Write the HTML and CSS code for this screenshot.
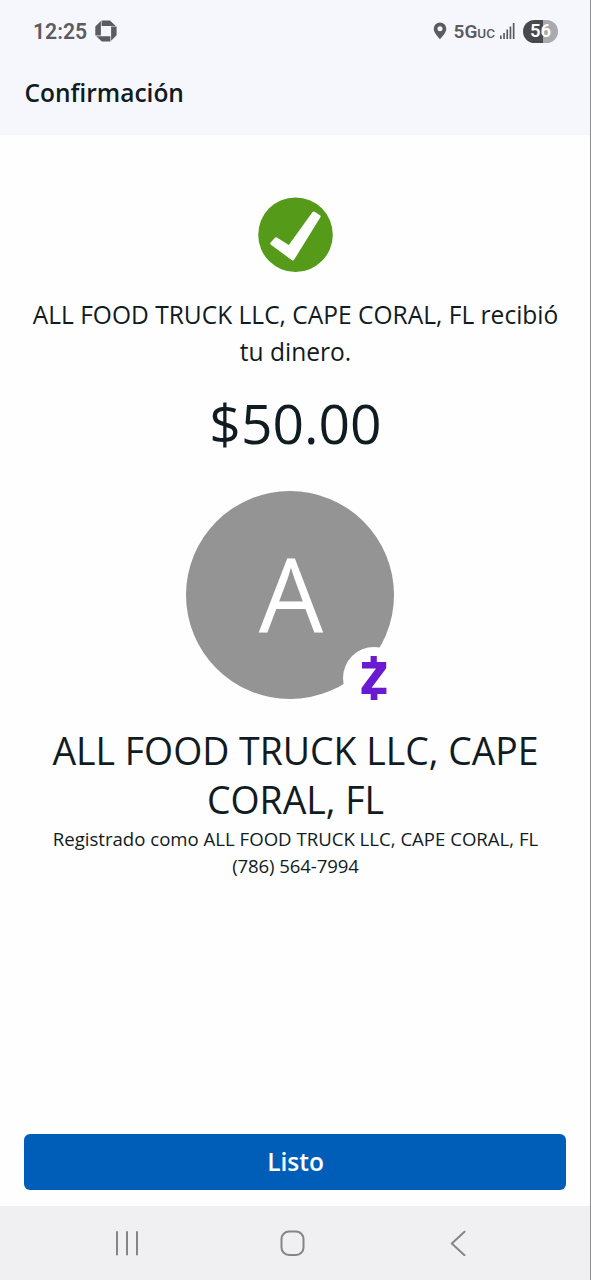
FILE: index.html
```html
<!DOCTYPE html>
<html lang="es">
<head>
<meta charset="utf-8">
<title>Confirmación</title>
<link rel="stylesheet" href="styles.css">
</head>
<body>
<div class="screen">
  <header class="header">
    <div class="status">
      <div class="status-left">
        <span class="clock">12:25</span>
        <svg class="bank" width="22" height="22" viewBox="0 0 22 22">
          <path d="M6.600.4H15l5.700 5.500H6.600zM21.600 6.500v8.700l-5.500 5.500V6.500zM15.400 21.600H6.800L1.200 16.200h14.200zM.3 15.500V6.600L5.900 1v14.500z"/>
        </svg>
      </div>
      <div class="status-right">
        <svg class="pin" width="14" height="18" viewBox="0 0 14 18">
          <path fill-rule="evenodd" d="M7 .5a6.3 6.3 0 0 0-6.3 6.3C.7 11 7 17.2 7 17.2s6.300-6.200 6.300-10.400A6.300 6.300 0 0 0 7 .5zm0 3.700a2.500 2.500 0 1 1 0 5 2.500 2.500 0 0 1 0-5z"/>
        </svg>
        <span class="network">5G<small>UC</small></span>
        <svg class="signal" width="15" height="16" viewBox="0 0 15 16">
          <path d="M0 12.500h1.700V16H0zM3.200 10h1.700v6H3.200zM6.400 6.500h1.700V16H6.400zM9.600 3.500h1.700V16H9.600zM12.800 0h1.700v16h-1.700z"/>
        </svg>
        <span class="battery">56</span>
      </div>
    </div>
    <h1 class="title">Confirmación</h1>
  </header>
  <main class="content">
    <svg class="check" width="76" height="76" viewBox="0 0 76 76">
      <circle cx="37.500" cy="37.700" r="37.300" fill="#559a19"/>
      <path d="M13.800 46.500l4.300-4.800 13 8.400L55.800 16l5.300 3.400L34.800 62z" fill="#fff" stroke="#fff" stroke-width="3" stroke-linejoin="round"/>
    </svg>
    <p class="message">ALL FOOD TRUCK LLC, CAPE CORAL, FL recibió tu dinero.</p>
    <p class="amount">$50.00</p>
    <div class="avatar">
      <span class="initial">A</span>
      <span class="badge">
        <svg width="26" height="44" viewBox="0 0 26 44">
          <path d="M9.600 0h6.200v6h9.400v6.200L10.600 31.800h14.800V38h-9v6h-6.700v-6H.5v-6L15 12.600H1V6h8.600z" fill="#6a1bd1"/>
        </svg>
      </span>
    </div>
    <h2 class="name">ALL FOOD TRUCK LLC, CAPE CORAL, FL</h2>
    <p class="detail">Registrado como ALL FOOD TRUCK LLC, CAPE CORAL, FL</p>
    <p class="detail phone">(786) 564-7994</p>
  </main>
  <div class="action"><button class="done">Listo</button></div>
  <nav class="navbar">
    <svg width="24" height="26" viewBox="0 0 24 26"><path d="M2 2v22.500M12 2v22.500M22 2v22.500"/></svg>
    <svg class="home" width="26" height="26" viewBox="0 0 26 26"><rect x="1.500" y="1.500" width="22" height="23.500" rx="7.500"/></svg>
    <svg width="18" height="26" viewBox="0 0 18 26"><path d="M15.500 1.800L2.800 13.500l12.700 11.700"/></svg>
  </nav>
</div>
</body>
</html>
```
FILE: styles.css
```css
* { box-sizing: border-box; }
body, p, h1, h2 { margin: 0; }
body { background: #fefefe; }
.screen {
  width: 591px;
  height: 1280px;
  display: flex;
  flex-direction: column;
  border-right: 1px solid #8e8e90;
  font-family: "Open Sans", "Noto Sans", sans-serif;
  color: #111b22;
}
.header { height: 135px; background: #f5f7fc; }
.status {
  height: 62px;
  padding: 0 32px 0 33px;
  display: flex;
  align-items: center;
  justify-content: space-between;
  color: #5b5c60;
  fill: #5b5c60;
  font-family: Roboto, sans-serif;
  font-weight: 600;
}
.status-left, .status-right { display: flex; align-items: center; }
.clock { font-size: 21.200px; }
.bank { margin-left: 8px; }
.network { margin-left: 7px; font-size: 19px; }
.network small { font-size: 13.500px; font-weight: 500; }
.signal { margin: 0 8px 0 5px; }
.battery {
  width: 35px;
  height: 23px;
  border-radius: 12px;
  background: linear-gradient(90deg, #48494b 56%, #a9aaae 56%);
  color: #fff;
  font-size: 18.500px;
  line-height: 23px;
  text-align: center;
}
.title {
  padding: 14px 24.500px 0;
  font-size: 24.500px;
  line-height: 34px;
  font-weight: 600;
}
.content {
  flex: 1;
  padding: 62px 19px 0 20px;
  display: flex;
  flex-direction: column;
  align-items: center;
  text-align: center;
}
.check { display: block; }
.message { margin-top: 23px; font-size: 24.540px; line-height: 37px; }
.amount { margin-top: 16px; font-size: 55.200px; line-height: 74px; }
.avatar {
  position: relative;
  width: 208px;
  height: 208px;
  margin: 30.500px 11px 0 0;
  border-radius: 50%;
  background: #949494;
}
.initial {
  display: block;
  padding-left: 2px;
  color: #fff;
  font-size: 102px;
  font-weight: 500;
  line-height: 203px;
}
.badge {
  position: absolute;
  left: 156.500px;
  top: 156.500px;
  width: 62px;
  height: 62px;
  border-radius: 50%;
  background: #fefefe;
  display: flex;
  align-items: center;
  justify-content: center;
}
.name { margin-top: 27.500px; font-size: 37.400px; line-height: 49px; font-weight: 400; }
.detail { margin-top: 1px; font-size: 18.600px; line-height: 27px; }
.phone { margin-top: 0; letter-spacing: -.1px; }
.action { padding: 0 24px 16px; }
.done {
  display: block;
  width: 100%;
  height: 56px;
  padding: 0 0 2px 1px;
  border: 0;
  border-radius: 6px;
  background: #005eb8;
  color: #fff;
  font: 600 24.500px "Open Sans", "Noto Sans", sans-serif;
}
.navbar {
  height: 74px;
  background: #f0f0f2;
  display: flex;
  align-items: center;
  justify-content: space-between;
  padding: 0 123px 0 115px;
  fill: none;
  stroke: #858587;
  stroke-width: 2;
  stroke-linecap: round;
  stroke-linejoin: round;
}
.home { margin-right: 2px; }
```
